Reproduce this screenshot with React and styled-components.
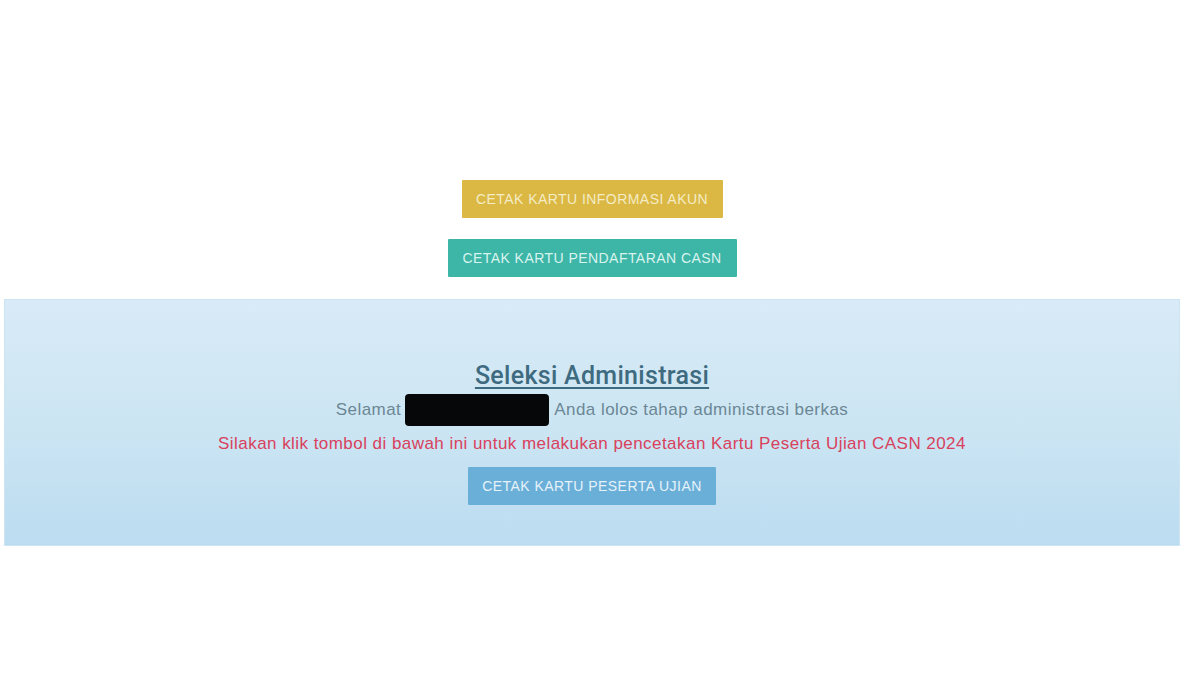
import React from "react";
import styled, { createGlobalStyle } from "styled-components";

const Global = createGlobalStyle`
  html, body { margin: 0; padding: 0; background: #ffffff; }
  body { font-family: "Liberation Sans", Arial, sans-serif; }
`;

const Page = styled.div`
  width: 1184px;
  height: 675px;
  padding-top: 180px;
  box-sizing: border-box;
  display: flex;
  flex-direction: column;
  align-items: center;
`;

const ActionList = styled.div`
  display: flex;
  flex-direction: column;
  align-items: center;
  gap: 21px;
`;

const Button = styled.button`
  display: flex;
  align-items: center;
  justify-content: center;
  box-sizing: border-box;
  width: ${(p) => p.$w}px;
  height: 38px;
  border: none;
  border-radius: 1px;
  background: ${(p) => p.$bg};
  color: ${(p) => p.$fg || "#f6f3dc"};
  font-family: "Liberation Sans", Arial, sans-serif;
  font-size: 14px;
  letter-spacing: 0.45px;
  text-transform: uppercase;
  padding: 0;
  cursor: pointer;
`;

const Panel = styled.section`
  box-sizing: border-box;
  align-self: flex-start;
  margin: 22px 0 0 4px;
  width: 1176px;
  height: 247px;
  background-image: linear-gradient(#d9eaf8 0%, #cfe7f3 40%, #bcdcf1 100%);
  border: 1px solid #cde4f2;
  display: flex;
  flex-direction: column;
  align-items: center;
  padding-top: 62px;
`;

const Title = styled.h2`
  margin: 0;
  font-family: "Roboto", "Liberation Sans", sans-serif;
  font-weight: 500;
  font-size: 25px;
  line-height: 28px;
  color: #3e6b80;
  text-decoration: underline;
  text-decoration-thickness: 2px;
  text-underline-offset: 3px;
  letter-spacing: 0.3px;
`;

const Greeting = styled.p`
  margin: 4px 0 0;
  display: flex;
  align-items: center;
  font-size: 17px;
  letter-spacing: 0.45px;
  color: #6b8795;
  line-height: 32px;
`;

const Redacted = styled.span`
  display: inline-block;
  width: 144px;
  height: 32px;
  background: #050708;
  border-radius: 4px;
  margin: 0 5px 0 4px;
`;

const Notice = styled.p`
  margin: 7px 0 0;
  font-size: 17px;
  letter-spacing: 0.45px;
  line-height: 22px;
  color: #d9415d;
`;

const PanelAction = styled.div`
  margin-top: 12px;
`;

export default function App() {
  return (
    <>
      <Global />
      <Page>
        <ActionList>
          <Button $w={261} $bg="#dbb744" $fg="#f3ecc4">Cetak Kartu Informasi Akun</Button>
          <Button $w={289} $bg="#3db6a7" $fg="#d9f3ee">Cetak Kartu Pendaftaran CASN</Button>
        </ActionList>
        <Panel>
          <Title>Seleksi Administrasi</Title>
          <Greeting>
            Selamat<Redacted />Anda lolos tahap administrasi berkas
          </Greeting>
          <Notice>
            Silakan klik tombol di bawah ini untuk melakukan pencetakan Kartu Peserta Ujian CASN 2024
          </Notice>
          <PanelAction>
            <Button $w={248} $bg="#6aafd8" $fg="#e6f2fa">Cetak Kartu Peserta Ujian</Button>
          </PanelAction>
        </Panel>
      </Page>
    </>
  );
}
